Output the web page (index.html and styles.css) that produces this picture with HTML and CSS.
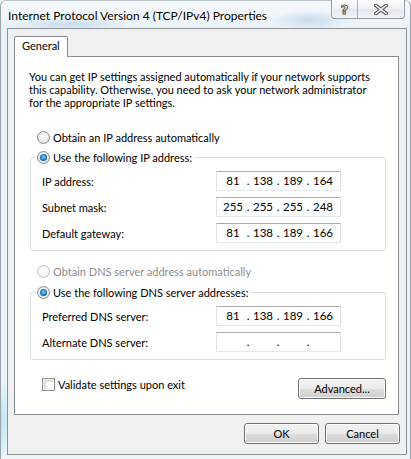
FILE: index.html
```html
<!DOCTYPE html>
<html>
<head>
<meta charset="utf-8">
<link rel="stylesheet" href="styles.css">
</head>
<body>
<div class="window">
  <div class="titlebar">
    <div class="title">Internet Protocol Version 4 (TCP/IPv4) Properties</div>
    <div class="caption-btns">
      <div class="cbtn help"><span class="help-glyph">?</span></div>
      <div class="cbtn close">
        <svg width="14" height="11" viewBox="0 0 14 11">
          <path d="M2 1.5 L12 9.5 M12 1.5 L2 9.5" stroke="#5a5a5a" stroke-width="3.6" stroke-linecap="square" fill="none"/>
          <path d="M2 1.5 L12 9.5 M12 1.5 L2 9.5" stroke="#ffffff" stroke-width="1.6" stroke-linecap="square" fill="none"/>
        </svg>
      </div>
    </div>
  </div>
  <div class="client">
    <div class="tabs"><div class="tab">General</div></div>
    <div class="panel">
      <p class="intro">You can get IP settings assigned automatically if your network supports<br>this capability. Otherwise, you need to ask your network administrator<br>for the appropriate IP settings.</p>
      <div class="radio-row first">
        <span class="radio"></span><span>Obtain an IP address automatically</span>
      </div>
      <fieldset class="group g1">
        <legend><span class="radio checked"></span><span>Use the following IP address:</span></legend>
        <div class="fields">
          <span class="lbl">IP address:</span>
          <div class="ipbox"><span class="seg">81</span><span class="dot">.</span><span class="seg">138</span><span class="dot">.</span><span class="seg">189</span><span class="dot">.</span><span class="seg">164</span></div>
          <span class="lbl">Subnet mask:</span>
          <div class="ipbox"><span class="seg">255</span><span class="dot">.</span><span class="seg">255</span><span class="dot">.</span><span class="seg">255</span><span class="dot">.</span><span class="seg">248</span></div>
          <span class="lbl">Default gateway:</span>
          <div class="ipbox"><span class="seg">81</span><span class="dot">.</span><span class="seg">138</span><span class="dot">.</span><span class="seg">189</span><span class="dot">.</span><span class="seg">166</span></div>
        </div>
      </fieldset>
      <div class="radio-row dns disabled">
        <span class="radio dis"></span><span>Obtain DNS server address automatically</span>
      </div>
      <fieldset class="group g2">
        <legend><span class="radio checked"></span><span>Use the following DNS server addresses:</span></legend>
        <div class="fields">
          <span class="lbl">Preferred DNS server:</span>
          <div class="ipbox"><span class="seg">81</span><span class="dot">.</span><span class="seg">138</span><span class="dot">.</span><span class="seg">189</span><span class="dot">.</span><span class="seg">166</span></div>
          <span class="lbl">Alternate DNS server:</span>
          <div class="ipbox"><span class="seg"></span><span class="dot">.</span><span class="seg"></span><span class="dot">.</span><span class="seg"></span><span class="dot">.</span><span class="seg"></span></div>
        </div>
      </fieldset>
      <div class="bottom-row">
        <label class="check"><span class="box"></span><span>Validate settings upon exit</span></label>
        <div class="btn advanced">Advanced...</div>
      </div>
    </div>
    <div class="dialog-btns">
      <div class="btn ok">OK</div>
      <div class="btn cancel">Cancel</div>
    </div>
  </div>
</div>
</body>
</html>
```

FILE: styles.css
```css
* { box-sizing: border-box; }
html, body { margin: 0; padding: 0; }
body {
  width: 411px;
  height: 459px;
  overflow: hidden;
  font-family: Lato, "Open Sans", sans-serif;
  font-size: 11px;
  color: #000;
  background:
    radial-gradient(ellipse 60px 8px at 70px 24px, rgba(170,200,225,0.55), rgba(170,200,225,0) 100%),
    radial-gradient(ellipse 40px 10px at 310px 20px, rgba(160,195,225,0.5), rgba(160,195,225,0) 100%),
    radial-gradient(ellipse 10px 40px at 2px 420px, rgba(150,220,240,0.6), rgba(150,220,240,0) 100%),
    linear-gradient(#f6f9fc, #e9f1f7 30px, #eef5f9);
}
.window {
  height: 459px;
  border-left: 1px solid #9aa3aa;
  border-right: 1px solid #9aa3aa;
  border-top: 1px solid #b9c2c9;
  border-radius: 6px 6px 0 0;
}
.titlebar {
  display: flex;
  height: 27px;
  padding-left: 7px;
}
.title {
  align-self: center;
  font-size: 12px;
  margin-top: 2px;
  text-shadow: 0 0 6px #ffffff, 0 0 3px #ffffff;
}
.caption-btns {
  margin-left: auto;
  margin-right: 5px;
  margin-top: -1px;
  display: flex;
  height: 19px;
  border: 1px solid #8f989f;
  border-top: none;
  border-radius: 0 0 4px 4px;
  background: linear-gradient(#fbfcfd, #eef2f5 50%, #e3e9ee 51%, #edf2f6);
  box-shadow: inset 0 0 0 1px rgba(255,255,255,0.7);
}
.cbtn {
  display: flex;
  align-items: center;
  justify-content: center;
}
.help {
  width: 26px;
  border-right: 1px solid #a9b1b7;
}
.help-glyph {
  font-family: "DejaVu Sans", sans-serif;
  font-weight: bold;
  font-size: 13px;
  line-height: 13px;
  color: #ffffff;
  -webkit-text-stroke: 1px #5a5a5a;
  margin-top: 1px;
}
.close { width: 46px; }

.client {
  margin-left: 6px;
  width: 400px;
  height: 427px;
  border: 1px solid #8c9196;
  background: #f0f0f0;
  padding: 7px 6px 0 6px;
  display: flex;
  flex-direction: column;
}
.tabs {
  display: flex;
  height: 20px;
}
.tab {
  width: 54px;
  height: 21px;
  border: 1px solid #898c95;
  border-bottom: none;
  background: #fff;
  border-radius: 2px 2px 0 0;
  padding-left: 7px;
  line-height: 18px;
  position: relative;
  z-index: 1;
}
.panel {
  width: 385px;
  height: 359px;
  border: 1px solid #898c95;
  background: #fff;
  padding: 13px 12px 0 14px;
}
.intro {
  margin: 0;
  line-height: 13px;
  white-space: nowrap;
}
.radio-row {
  display: flex;
  align-items: center;
  height: 13px;
  margin-left: 8px;
  gap: 3px;
}
.radio-row.first { margin-top: 22px; }
.radio-row.dns { margin-top: 14px; }
.disabled { color: #8d8d8d; }

.radio {
  width: 13px;
  height: 13px;
  border-radius: 50%;
  border: 1px solid #8a8a8a;
  background: radial-gradient(circle at 50% 40%, #ffffff 0, #f2f2f2 40%, #d4d4d4 100%);
  position: relative;
  flex: none;
}
.radio.checked::after {
  content: "";
  position: absolute;
  left: 2px; top: 2px;
  width: 7px; height: 7px;
  border-radius: 50%;
  background: radial-gradient(circle at 50% 45%, #7fd0f7 0, #2b8ed6 45%, #0b3d67 85%, #1b2a3a 100%);
}
.radio.dis {
  border-color: #c4c4c4;
  background: radial-gradient(circle at 50% 40%, #ffffff 0, #f6f6f6 50%, #e6e6e6 100%);
}

.group {
  margin: 7px 0 0 1px;
  width: 356px;
  border: 1px solid #d5dfe5;
  border-radius: 3px;
  padding: 7px 0 7px 11px;
}
.group.g2 { margin-top: 8px; }
.group legend {
  display: flex;
  align-items: center;
  gap: 3px;
  height: 13px;
  margin-left: -6px;
  padding: 0 3px 0 1px;
}
.fields {
  display: grid;
  grid-template-columns: 174px 125px;
  row-gap: 6px;
  align-items: center;
}
.ipbox {
  height: 20px;
  border: 1px solid;
  border-color: #abadb3 #dbdfe6 #e3e9ef #e2e3ea;
  display: flex;
  align-items: center;
  padding-left: 3px;
  line-height: 16px;
  font-size: 11.5px;
}
.seg { width: 26px; text-align: center; }
.dot { width: 4px; text-align: center; }

.bottom-row {
  display: flex;
  align-items: flex-start;
  margin-top: 18px;
  width: 356px;
  margin-left: 1px;
}
.check {
  display: flex;
  align-items: center;
  gap: 3px;
  margin-left: 12px;
  height: 13px;
}
.box {
  width: 13px;
  height: 13px;
  border: 1px solid #8e8f8f;
  background: #fff;
  box-shadow: inset 0 0 0 1px #f4f4f4, inset 1px 1px 0 2px #dcdcdc;
  flex: none;
}
.btn {
  height: 21px;
  border: 1px solid #707070;
  border-radius: 3px;
  background: linear-gradient(#f2f2f2 0%, #ebebeb 50%, #dddddd 50%, #cfcfcf 100%);
  box-shadow: inset 0 0 0 1px #fcfcfc;
  display: flex;
  align-items: center;
  justify-content: center;
  line-height: 17px;
}
.advanced {
  margin-left: auto;
  width: 88px;
}
.dialog-btns {
  display: flex;
  justify-content: flex-end;
  gap: 6px;
  margin-top: 8px;
}
.ok, .cancel { width: 75px; }
```
